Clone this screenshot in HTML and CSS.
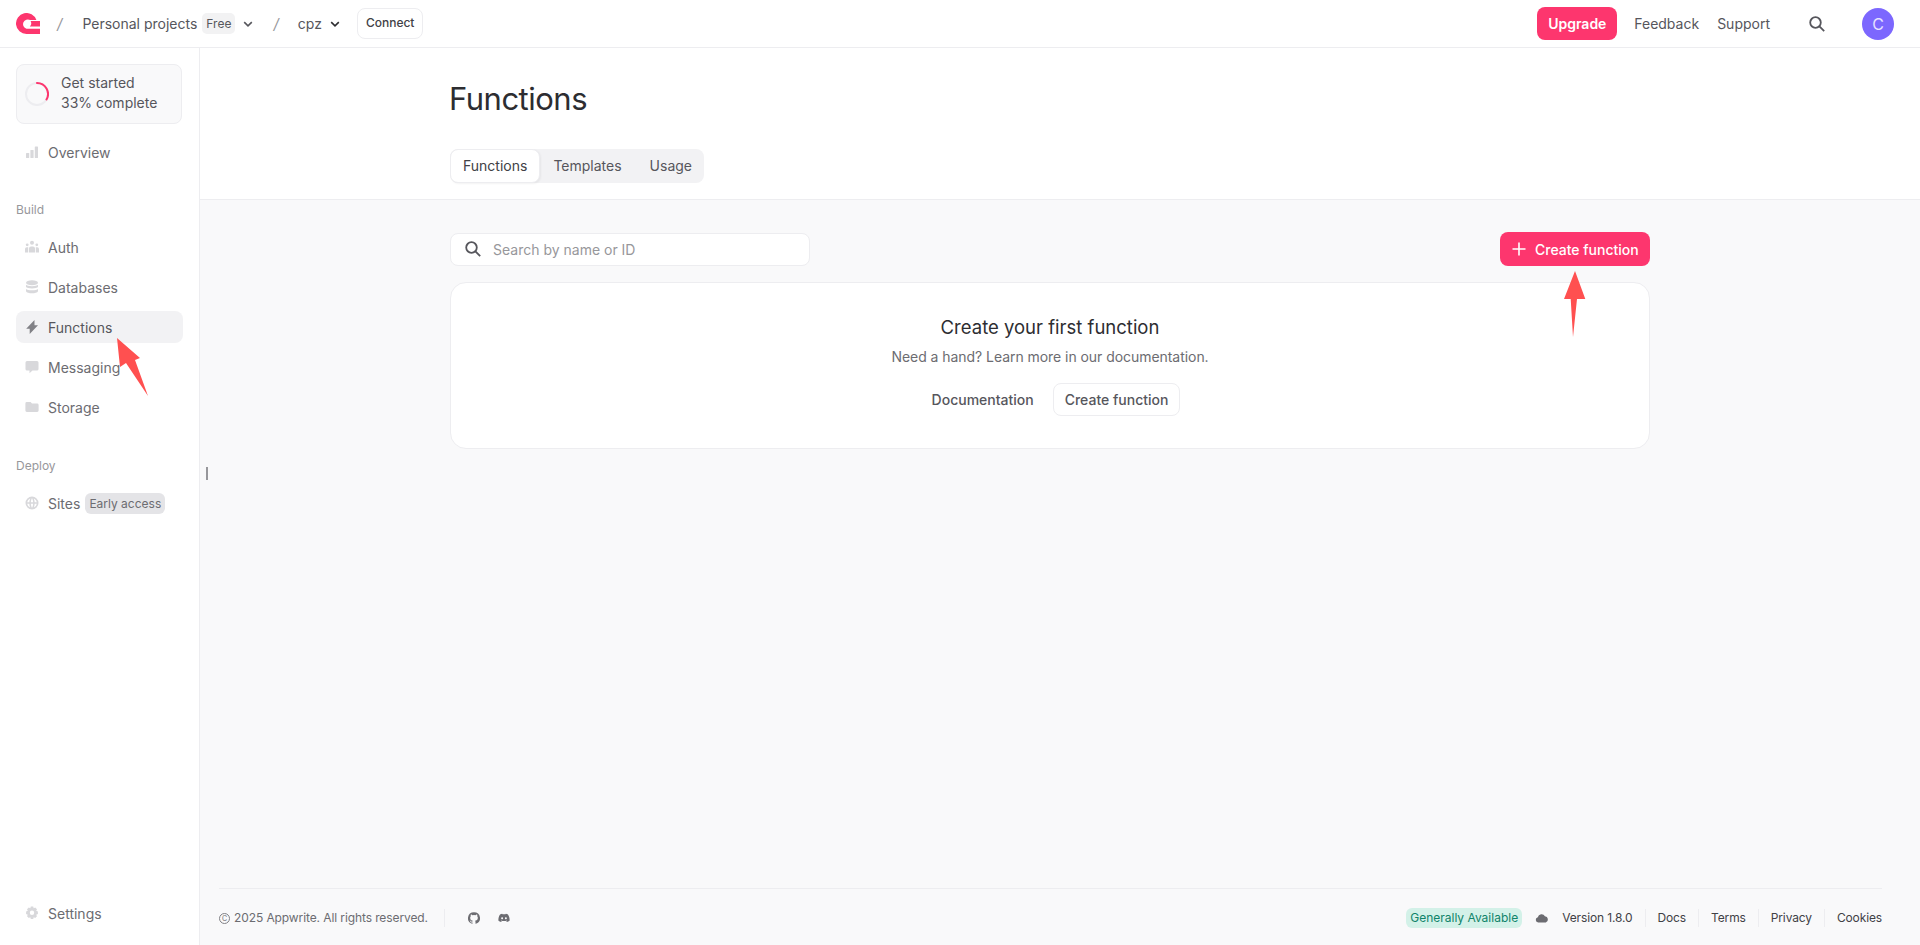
FILE: index.html
```html
<!DOCTYPE html>
<html lang="en">
<head>
<meta charset="utf-8">
<title>Functions - Appwrite</title>
<link rel="stylesheet" href="styles.css">
</head>
<body>
<div class="app">
  <header class="topbar">
    <svg class="logo" viewBox="0 0 24 21"><path d="M24 15.800V21H10.500A10.500 10.500 0 1 1 20.400 7H14.200A4.800 4.800 0 1 0 10.500 15.800Z"/><path d="M24 8V13.500H13.800A4.600 4.600 0 0 0 14.600 8Z"/></svg>
    <span class="slash slash-a">/</span>
    <span class="crumb">Personal projects</span>
    <span class="free">Free</span>
    <svg class="chev" viewBox="0 0 10 6"><path d="M1.200 1.200 5 4.800l3.800-3.600"/></svg>
    <span class="slash slash-b">/</span>
    <span class="crumb">cpz</span>
    <svg class="chev chev-dark" viewBox="0 0 10 6"><path d="M1.200 1.200 5 4.800l3.800-3.600"/></svg>
    <span class="connect">Connect</span>
    <div class="topright">
      <span class="upgrade">Upgrade</span>
      <span class="toplink">Feedback</span>
      <span class="toplink link-support">Support</span>
      <svg class="topsearch" viewBox="0 0 16 16"><circle cx="6.500" cy="6.500" r="5.300"/><path d="m10.400 10.400 4.800 4.800"/></svg>
      <span class="avatar">C</span>
    </div>
  </header>
  <div class="body">
    <aside class="sidebar">
      <div class="progress">
        <svg class="ring" viewBox="0 0 24 24"><circle class="ring-bg" cx="12" cy="12" r="11"/><path class="ring-fg" d="M12 1A11 11 0 0 1 21.500 17.500"/></svg>
        <div class="progress-text"><div>Get started</div><div>33% complete</div></div>
      </div>
      <a class="nav nav-first"><svg class="ico" viewBox="0 0 14 14"><rect x="1" y="8" width="3.200" height="5" rx=".6"/><rect x="5.400" y="5" width="3.200" height="8" rx=".6"/><rect x="9.800" y="1.500" width="3.200" height="11.500" rx=".6"/></svg>Overview</a>
      <div class="section">Build</div>
      <a class="nav"><svg class="ico" viewBox="0 0 14 14"><circle cx="7" cy="2.800" r="2"/><circle cx="2.200" cy="4.800" r="1.400"/><circle cx="11.800" cy="4.800" r="1.400"/><path d="M4 12.500V8.400A2 2 0 0 1 6 6.400H8A2 2 0 0 1 10 8.400V12.500ZM0 12.500V9A1.700 1.700 0 0 1 1.700 7.300H3.200V12.500ZM14 12.500V9A1.700 1.700 0 0 0 12.300 7.300H10.800V12.500Z"/></svg>Auth</a>
      <a class="nav"><svg class="ico" viewBox="0 0 14 14"><ellipse cx="7" cy="2.800" rx="6" ry="2.500"/><path d="M1 4.800C2 6.600 12 6.600 13 4.800V7C12 8.900 2 8.900 1 7ZM1 9C2 10.800 12 10.800 13 9V11.200C12 13.900 2 13.900 1 11.200Z"/></svg>Databases</a>
      <a class="nav nav-active"><svg class="ico" viewBox="0 0 14 14"><path d="M9.500 0V5.300H13L4.700 14V8.800H1.200Z"/></svg>Functions</a>
      <a class="nav"><svg class="ico" viewBox="0 0 14 14"><path d="M2 1H12A1.500 1.500 0 0 1 13.500 2.500V9A1.500 1.500 0 0 1 12 10.500H7.500L4.500 13.300V10.500H2A1.500 1.500 0 0 1 .5 9V2.500A1.500 1.500 0 0 1 2 1Z"/></svg>Messaging</a>
      <a class="nav"><svg class="ico" viewBox="0 0 14 14"><path d="M1.800 2H5.600L7 3.600H12.200A1.400 1.400 0 0 1 13.600 5V10.600A1.400 1.400 0 0 1 12.200 12H1.800A1.400 1.400 0 0 1 .4 10.600V3.400A1.400 1.400 0 0 1 1.800 2Z"/></svg>Storage</a>
      <div class="section section-deploy">Deploy</div>
      <a class="nav"><svg class="ico" viewBox="0 0 14 14"><path fill-rule="evenodd" d="M7 .5A6.500 6.500 0 1 0 7 13.500 6.500 6.500 0 0 0 7 .5ZM5.200 2.400A5 5 0 0 0 2.200 6.300H4.300C4.400 5 4.700 3.600 5.200 2.400ZM8.800 2.400C9.300 3.600 9.600 5 9.700 6.300H11.800A5 5 0 0 0 8.800 2.400ZM7 2.100C6.400 3.300 5.900 4.800 5.800 6.300H8.200C8.100 4.800 7.600 3.300 7 2.100ZM2.200 7.700A5 5 0 0 0 5.200 11.600C4.700 10.400 4.400 9 4.300 7.700ZM5.800 7.700C5.900 9.200 6.400 10.700 7 11.900 7.600 10.700 8.100 9.200 8.200 7.700ZM9.700 7.700C9.600 9 9.300 10.400 8.800 11.600A5 5 0 0 0 11.800 7.700Z"/></svg>Sites<span class="early">Early access</span></a>
      <a class="nav nav-settings"><svg class="ico" viewBox="0 0 14 14"><path fill-rule="evenodd" d="M5.800.6H8.200L8.700 2.300 10.200 1.500 12 3.200 11.200 4.800 12.900 5.500V8L11.200 8.700 12 10.300 10.200 12 8.700 11.200 8.200 13H5.800L5.300 11.200 3.800 12 2 10.300 2.800 8.700 1.100 8V5.500L2.800 4.800 2 3.200 3.800 1.500 5.300 2.300ZM7 4.600A2.200 2.200 0 1 0 7 9 2.200 2.200 0 0 0 7 4.600Z"/></svg>Settings</a>
    </aside>
    <main class="main">
      <section class="pagehead">
        <div class="inner">
          <h1 class="title">Functions</h1>
          <nav class="tabs"><span class="tab tab-on">Functions</span><span class="tab">Templates</span><span class="tab">Usage</span></nav>
        </div>
      </section>
      <section class="content">
        <div class="inner">
          <div class="toolbar">
            <label class="search">
              <svg class="search-ico" viewBox="0 0 16 16"><circle cx="6.500" cy="6.500" r="5.300"/><path d="m10.400 10.400 4.800 4.800"/></svg>
              <span class="placeholder">Search by name or ID</span>
            </label>
            <span class="primary"><svg class="plus" viewBox="0 0 14 14"><path d="M7 .5v13M.5 7h13"/></svg>Create function</span>
          </div>
          <div class="card">
            <h2 class="card-title">Create your first function</h2>
            <p class="card-sub">Need a hand? Learn more in our documentation.</p>
            <div class="card-actions"><span class="doc">Documentation</span><span class="secondary">Create function</span></div>
          </div>
        </div>
      </section>
      <footer class="footer">
        <div class="foot-left">
          <span class="copy"><span class="copy-mark">C</span>2025 Appwrite. All rights reserved.</span>
          <span class="foot-icons">
            <svg class="foot-ico" viewBox="0 0 16 16"><path d="M8 .2a8 8 0 0 0-2.500 15.600c.4.1.5-.2.5-.4v-1.400c-2.200.5-2.700-1-2.700-1-.4-.9-.9-1.200-.9-1.200-.7-.5.1-.5.1-.5.8.1 1.200.8 1.200.8.7 1.200 1.900.9 2.300.7.1-.5.300-.9.500-1.100-1.800-.2-3.600-.9-3.600-4 0-.9.300-1.600.8-2.100-.1-.2-.4-1 .1-2.100 0 0 .7-.2 2.200.8a7.600 7.600 0 0 1 4 0c1.500-1 2.200-.8 2.200-.8.5 1.100.2 1.900.1 2.100.5.5.8 1.200.8 2.100 0 3.100-1.900 3.800-3.700 4 .3.3.6.7.6 1.500v2.200c0 .2.100.5.5.4A8 8 0 0 0 8 .2Z"/></svg>
            <svg class="foot-ico" viewBox="0 0 16 16"><path fill-rule="evenodd" d="M13.300 3.200A12 12 0 0 0 10.400 2.300L10 3.100A11 11 0 0 0 6 3.100L5.600 2.300A12 12 0 0 0 2.700 3.200C.8 6 .3 8.800.6 11.500A12 12 0 0 0 4.200 13.300L5 12.100 3.800 11.500 4.100 11.300C6.500 12.400 9.500 12.400 11.900 11.300L12.200 11.500 11 12.100 11.800 13.300A12 12 0 0 0 15.400 11.500C15.800 8.400 14.900 5.600 13.300 3.200ZM5.500 9.800C4.800 9.800 4.200 9.200 4.200 8.400S4.800 7 5.500 7 6.800 7.600 6.800 8.400 6.200 9.800 5.500 9.800ZM10.500 9.800C9.800 9.800 9.200 9.200 9.200 8.400S9.800 7 10.500 7 11.800 7.600 11.800 8.400 11.200 9.800 10.500 9.800Z"/></svg>
          </span>
        </div>
        <div class="foot-right">
          <span class="ga">Generally Available</span>
          <svg class="cloud" viewBox="0 0 14 10"><path d="M3.200 9.500A2.700 2.700 0 0 1 2.800 4.200 3.800 3.800 0 0 1 9.900 3.300 3.200 3.200 0 0 1 10.800 9.500Z"/></svg>
          <span class="flink flink-first">Version 1.8.0</span>
          <span class="flink">Docs</span>
          <span class="flink">Terms</span>
          <span class="flink">Privacy</span>
          <span class="flink flink-last">Cookies</span>
        </div>
      </footer>
    </main>
  </div>
  <svg class="arrow arrow-left" viewBox="0 0 33 60"><path d="M0 1 23 21 18 23 31 59 9 26 3 30Z"/></svg>
  <svg class="arrow arrow-right" viewBox="0 0 22 68"><path d="M11 1 21.300 29H13L9 67 6.700 29H0Z"/></svg>
  <span class="caret"></span>
</div>
</body>
</html>
```

FILE: styles.css
```css
* { box-sizing: border-box; }
html, body { margin: 0; height: 100%; }
body { font-family: Inter, "Liberation Sans", sans-serif; font-size: 14px; color: #56565c; background: #fff; overflow: hidden; }
.app { position: relative; height: 945px; display: flex; flex-direction: column; }

.topbar { height: 48px; flex: none; display: flex; align-items: center; padding: 0 26px 0 16px; border-bottom: 1px solid #ededf0; }
.logo { width: 24px; height: 21px; fill: #fd366e; flex: none; }
.slash { color: #97979b; font-size: 15px; font-style: italic; }
.slash-a { margin: 0 20px 0 17px; }
.slash-b { margin: 0 19px 0 20px; }
.crumb { color: #56565c; font-size: 14px; }
.free { margin-left: 5px; background: #f2f2f3; border-radius: 5px; font-size: 12px; height: 21px; line-height: 21px; padding: 0 4px; color: #56565c; }
.chev { width: 10px; height: 6px; margin-left: 8px; fill: none; stroke: #56565c; stroke-width: 1.6; }
.chev-dark { stroke: #2d2d31; }
.connect { margin-left: 17px; height: 31px; line-height: 28px; padding: 0 8px; border: 1px solid #ededf0; border-radius: 8px; font-size: 12px; font-weight: 500; color: #414146; }
.topright { margin-left: auto; display: flex; align-items: center; }
.upgrade { width: 80px; height: 33px; line-height: 33px; text-align: center; background: #fd366e; color: #fff; border-radius: 8px; font-weight: 600; font-size: 14px; }
.toplink { color: #56565c; font-size: 14px; margin-left: 17px; }
.link-support { margin-left: 18px; }
.topsearch { width: 16px; height: 16px; margin-left: 39px; fill: none; stroke: #56565c; stroke-width: 1.8; }
.avatar { width: 32px; height: 32px; margin-left: 37px; border-radius: 50%; background: #7c67fe; color: #e6e1ff; font-size: 16px; line-height: 32px; text-align: center; }

.body { flex: 1; display: flex; min-height: 0; }
.sidebar { width: 200px; flex: none; display: flex; flex-direction: column; padding: 16px 16px 0; border-right: 1px solid #ededf0; background: #fff; }
.progress { height: 60px; width: 166px; display: flex; align-items: center; gap: 12px; padding-left: 8px; border: 1px solid #ededf0; border-radius: 8px; background: #f9f9fa; flex: none; }
.ring { width: 24px; height: 24px; fill: none; stroke-width: 2; flex: none; }
.ring-bg { stroke: #ededf0; }
.ring-fg { stroke: #fd366e; stroke-linecap: round; }
.progress-text { font-size: 14px; line-height: 20px; color: #56565c; padding-bottom: 2px; }
.nav { height: 32px; width: 167px; flex: none; display: flex; align-items: center; gap: 7px; padding-left: 9px; border-radius: 8px; color: #6c6c71; font-size: 14px; margin-bottom: 8px; }
.nav-first { margin-top: 12px; margin-bottom: 0; }
.nav-active { background: #f2f2f4; color: #56565c; }
.nav-settings { margin-top: auto; margin-bottom: 16px; }
.ico { width: 14px; height: 14px; fill: #d8d8db; flex: none; margin-right: 2px; }
.nav-active .ico { fill: #818186; }
.section { color: #97979b; font-size: 12px; line-height: 16px; margin: 34px 0 13px; flex: none; height: 16px; }
.section-deploy { margin-top: 27px; }
.early { margin-left: -2px; background: #e4e4e7; border-radius: 6px; font-size: 12px; height: 21px; line-height: 21px; padding: 0 4px; color: #6c6c71; white-space: nowrap; }

.main { flex: 1; min-width: 0; display: flex; flex-direction: column; background: #f9f9fa; }
.pagehead { height: 152px; flex: none; background: #fff; border-bottom: 1px solid #ededf0; padding-top: 32px; }
.inner { width: 1200px; margin-left: 250px; }
.title { margin: 0 0 0 -1px; font-weight: 400; font-size: 31px; line-height: 38px; color: #2d2d31; letter-spacing: -.5px; }
.tabs { margin-top: 31px; display: inline-flex; height: 34px; background: #f2f2f4; border-radius: 8px; font-size: 14px; padding-right: 12px; }
.tab { padding: 0 14px; line-height: 34px; height: 34px; color: #56565c; }
.tab:last-child { padding-right: 0; }
.tab-on { background: #fff; border: 1px solid #ededf0; border-radius: 8px; line-height: 32px; padding: 0 12px; color: #414146; margin-right: -1px; box-shadow: 1px 1px 2px rgba(0,0,0,.05); }

.content { flex: 1; padding-top: 32px; }
.toolbar { display: flex; justify-content: space-between; align-items: center; height: 34px; }
.search { width: 360px; height: 33px; display: flex; align-items: center; gap: 12px; padding-left: 14px; background: #fff; border: 1px solid #ededf0; border-radius: 8px; }
.search-ico { width: 16px; height: 16px; fill: none; stroke: #56565c; stroke-width: 1.8; flex: none; }
.placeholder { color: #97979b; font-size: 14px; }
.primary { height: 34px; width: 150px; display: flex; align-items: center; padding-left: 12px; gap: 9px; background: #fd366e; color: #fff; border-radius: 8px; font-size: 14px; font-weight: 500; }
.plus { width: 14px; height: 14px; fill: none; stroke: #fff; stroke-width: 1.6; flex: none; }
.card { margin-top: 16px; width: 1200px; height: 167px; background: #fff; border: 1px solid #ededf0; border-radius: 16px; display: flex; flex-direction: column; align-items: center; padding-top: 32px; }
.card-title { margin: 0; font-weight: 400; font-size: 18.5px; line-height: 24px; color: #2d2d31; }
.card-sub { margin: 8px 0 0; font-size: 14px; line-height: 20px; color: #6c6c71; letter-spacing: -.05px; }
.card-actions { margin-top: 16px; padding-left: 12px; display: flex; align-items: center; gap: 19px; }
.doc { color: #56565c; font-weight: 500; font-size: 14px; }
.secondary { height: 33px; line-height: 31px; padding: 0 11px; border: 1px solid #ededf0; border-radius: 8px; color: #56565c; font-weight: 500; font-size: 14px; background: #fff; }

.footer { flex: none; height: 57px; margin: 0 38px 0 19px; padding-top: 2px; border-top: 1px solid #ededf0; display: flex; justify-content: space-between; align-items: center; font-size: 12px; }
.foot-left { display: flex; align-items: center; }
.copy { color: #6c6c71; padding-right: 16px; border-right: 1px solid #ededf0; line-height: 18px; display: inline-flex; align-items: center; letter-spacing: -.1px; }
.copy-mark { width: 11px; height: 11px; border: 1px solid #818186; border-radius: 50%; font-size: 7px; line-height: 9px; text-align: center; margin-right: 4px; }
.foot-icons { display: flex; align-items: center; gap: 18px; margin-left: 23px; }
.foot-ico { width: 12px; height: 12px; fill: #6c6c71; }
.foot-right { display: flex; align-items: center; }
.ga { background: #d3f1e8; color: #10846a; height: 20px; line-height: 20px; padding: 0 4px; border-radius: 6px; }
.cloud { width: 14px; height: 10px; fill: #6c6c71; margin-left: 13px; }
.flink { color: #414146; padding: 0 12px; border-right: 1px solid #ededf0; line-height: 18px; letter-spacing: -.13px; }
.flink-first { padding-left: 13px; }
.flink-last { border-right: 0; padding-right: 0; }

.arrow { position: absolute; fill: #ff5050; }
.arrow-left { left: 117px; top: 337px; width: 33px; height: 60px; }
.arrow-right { left: 1564px; top: 270px; width: 22px; height: 68px; }
.caret { position: absolute; left: 206px; top: 467px; width: 2px; height: 13px; background: #97979b; }
```
